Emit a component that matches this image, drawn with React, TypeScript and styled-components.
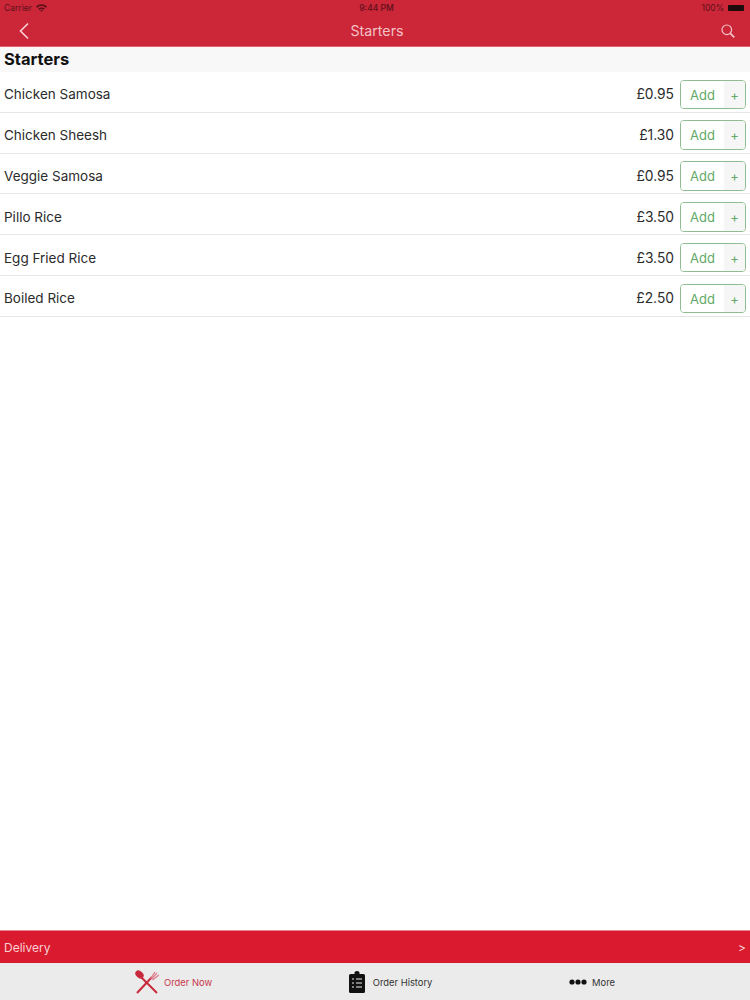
import React from "react";
import styled, { createGlobalStyle } from "styled-components";

const GlobalStyle = createGlobalStyle`
  html, body {
    margin: 0;
    padding: 0;
    background: #fff;
    font-family: "Inter", "Liberation Sans", sans-serif;
  }
  * { box-sizing: border-box; }
`;

const Page = styled.div`
  display: flex;
  flex-direction: column;
  height: 100vh;
  width: 100%;
  overflow: hidden;
`;

const Header = styled.header`
  height: 47px;
  background: #cb2739;
  border-bottom: 1px solid #e2606d;
  flex-shrink: 0;
`;

const StatusBar = styled.div`
  display: grid;
  grid-template-columns: 1fr auto 1fr;
  align-items: center;
  height: 15px;
  padding: 0 6px 0 4px;
  font-size: 8.5px;
  color: #5e1019;
`;

const StatusLeft = styled.div`
  display: flex;
  align-items: center;
  gap: 4px;
`;

const StatusTime = styled.span`
  padding-left: 5px;
  font-weight: 500;
`;

const StatusRight = styled.div`
  display: flex;
  align-items: center;
  justify-content: flex-end;
  gap: 4px;
`;

const Battery = styled.span`
  display: block;
  width: 16px;
  height: 6px;
  border-radius: 1px;
  background: #1c0a0c;
`;

const NavBar = styled.div`
  display: flex;
  align-items: center;
  justify-content: space-between;
  height: 31px;
  padding: 0 15px 0 18px;
`;

const NavTitle = styled.div`
  flex: 1;
  padding-left: 3px;
  color: #f3c2c7;
  font-size: 14.2px;
  text-align: center;
`;

const SectionHeading = styled.h2`
  margin: 0;
  height: 25px;
  flex-shrink: 0;
  padding: 0 4px;
  background: #f8f8f8;
  color: #111;
  font-size: 16.5px;
  font-weight: 700;
  line-height: 25px;
`;

const List = styled.main`
  flex: 1;
  background: #fff;
`;

const Row = styled.div`
  display: flex;
  align-items: center;
  height: 40.8px;
  padding: 5px 4px 0;
  border-bottom: 1px solid #e6e6e6;
`;

const ItemName = styled.span`
  flex: 1;
  font-size: 13.5px;
  color: #2b2b2b;
`;

const Price = styled.span`
  font-size: 13.8px;
  color: #2b2b2b;
  margin-right: 6px;
`;

const AddButton = styled.div`
  display: flex;
  width: 66px;
  height: 29.5px;
  border: 1px solid #8dbd90;
  border-radius: 4px;
  overflow: hidden;
  color: #62a968;
`;

const AddLabel = styled.span`
  flex: 1;
  text-align: center;
  font-size: 13px;
  line-height: 28px;
  background: #fff;
`;

const AddPlus = styled.span`
  width: 21px;
  text-align: center;
  font-size: 13px;
  line-height: 28px;
  background: #f6f6f6;
`;

const DeliveryBar = styled.div`
  display: flex;
  align-items: center;
  justify-content: space-between;
  flex-shrink: 0;
  height: 33px;
  padding: 0 4px;
  background: #da1a2e;
  border-top: 1px solid #e8848e;
  color: #f9d0d4;
  font-size: 12px;
`;

const TabBar = styled.nav`
  display: flex;
  justify-content: space-between;
  flex-shrink: 0;
  height: 37px;
  padding: 1px 135px 0;
  background: #ebebeb;
`;

const Tab = styled.div<{ $active?: boolean; $gap: number }>`
  display: flex;
  align-items: center;
  gap: ${(p) => p.$gap}px;
  font-size: 9.4px;
  color: ${(p) => (p.$active ? "#c8384c" : "#333")};
`;

const items = [
  { name: "Chicken Samosa", price: "£0.95" },
  { name: "Chicken Sheesh", price: "£1.30" },
  { name: "Veggie Samosa", price: "£0.95" },
  { name: "Pillo Rice", price: "£3.50" },
  { name: "Egg Fried Rice", price: "£3.50" },
  { name: "Boiled Rice", price: "£2.50" },
];

const App: React.FC = () => {
  return (
    <Page>
      <GlobalStyle />
      <Header>
        <StatusBar>
          <StatusLeft>
            Carrier
            <svg width="11" height="8" viewBox="0 0 11 8" fill="#5e1019">
              <path d="M0 2.6C3-.6 8-.6 11 2.6L9.8 3.9C7.4 1.5 3.6 1.5 1.2 3.9Z" />
              <path d="M2.2 4.8C4 3 7 3 8.8 4.8L7.6 5.9C6.2 4.8 4.8 4.8 3.4 5.9Z" />
              <path d="M4.2 6.6C5 6 6 6 6.8 6.6L5.5 8Z" />
            </svg>
          </StatusLeft>
          <StatusTime>9:44 PM</StatusTime>
          <StatusRight>
            100%
            <Battery />
          </StatusRight>
        </StatusBar>
        <NavBar>
          <svg width="12" height="18" viewBox="0 0 12 18" fill="none" stroke="#f8d3d6" strokeWidth="1.6">
            <path d="M10 1.5 2.5 9l7.5 7.5" />
          </svg>
          <NavTitle>Starters</NavTitle>
          <svg width="14" height="14" viewBox="0 0 14 14" fill="none" stroke="#f3c2c7" strokeWidth="1.2">
            <circle cx="5.8" cy="5.8" r="4.8" />
            <path d="m9.3 9.3 4 4" strokeWidth="1.8" />
          </svg>
        </NavBar>
      </Header>
      <SectionHeading>Starters</SectionHeading>
      <List>
        {items.map((item) => (
          <Row key={item.name}>
            <ItemName>{item.name}</ItemName>
            <Price>{item.price}</Price>
            <AddButton>
              <AddLabel>Add</AddLabel>
              <AddPlus>+</AddPlus>
            </AddButton>
          </Row>
        ))}
      </List>
      <DeliveryBar>
        <span>Delivery</span>
        <span>&gt;</span>
      </DeliveryBar>
      <TabBar>
        <Tab $active $gap={5}>
          <svg width="24" height="24" viewBox="0 0 24 24" fill="none">
            <path d="M6 7 22 23" stroke="#c8293c" strokeWidth="2" />
            <ellipse cx="4.5" cy="4.5" rx="4.6" ry="3.4" transform="rotate(40 4.5 4.5)" fill="#c8293c" />
            <path d="M17 7 2 23" stroke="#c8293c" strokeWidth="2" />
            <path d="M15.5 8.5 20 2M17 8.5 22 3M17.5 10 24 5" stroke="#de7f8c" strokeWidth="1.3" />
          </svg>
          Order Now
        </Tab>
        <Tab $gap={8}>
          <svg width="16" height="22" viewBox="0 0 16 22">
            <path d="M1.5 3H5.5V1.5A2.5 1.5 0 0 1 10.5 1.5V3H14.5A1.5 1.5 0 0 1 16 4.5V20.5A1.5 1.5 0 0 1 14.5 22H1.5A1.5 1.5 0 0 1 0 20.5V4.5A1.5 1.5 0 0 1 1.5 3Z" fill="#111" />
            <path d="M3 8H5M7 8H13M3 12H5M7 12H13M3 16H5M7 16H13" stroke="#eee" strokeWidth="1.2" />
          </svg>
          Order History
        </Tab>
        <Tab $gap={5}>
          <svg width="18" height="6" viewBox="0 0 18 6" fill="#111">
            <circle cx="3" cy="3" r="2.6" />
            <circle cx="9" cy="3" r="2.6" />
            <circle cx="15" cy="3" r="2.6" />
          </svg>
          More
        </Tab>
      </TabBar>
    </Page>
  );
};

export default App;
